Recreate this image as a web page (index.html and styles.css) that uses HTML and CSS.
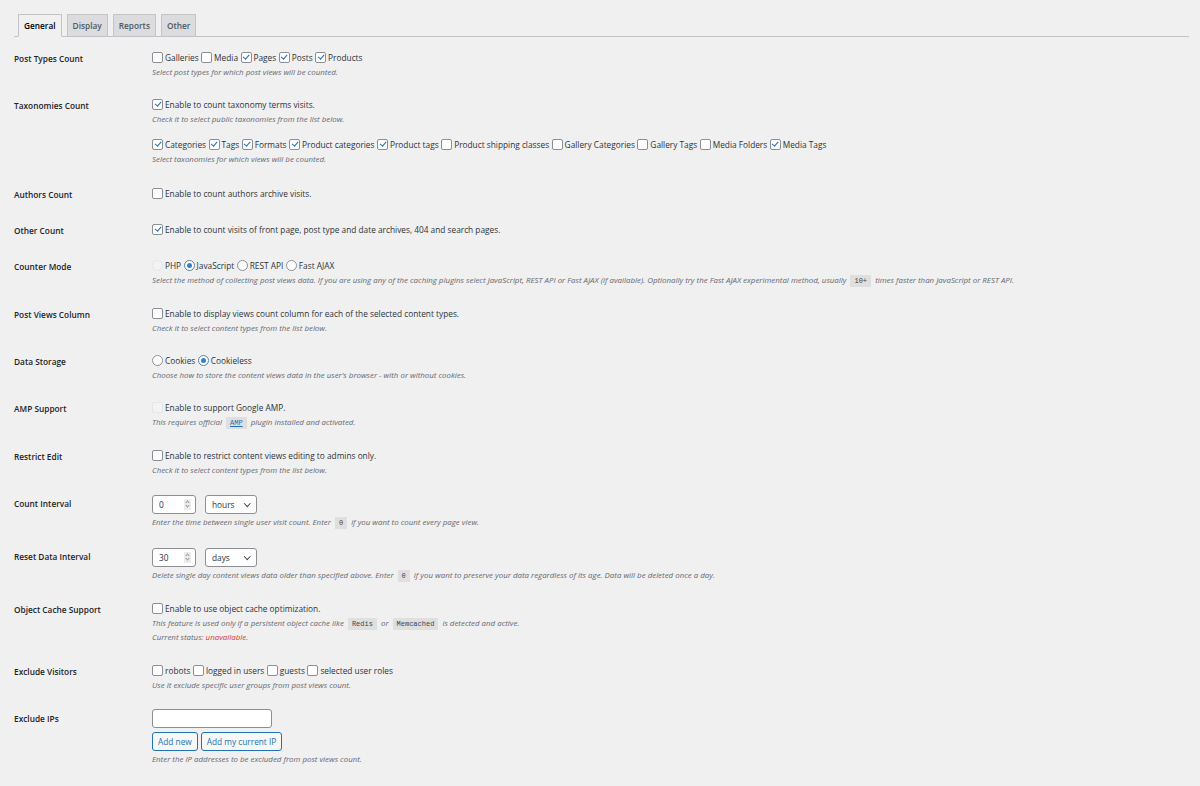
FILE: index.html
```html
<!DOCTYPE html>
<html lang="en">
<head>
    <meta charset="UTF-8">
    <title>Post Views Counter Settings</title>
    <link rel="stylesheet" href="styles.css">
</head>
<body>

    <div class="wrap">
        <!-- Settings tabs -->
        <nav class="tabs">
            <a class="tab active">General</a>
            <a class="tab">Display</a>
            <a class="tab">Reports</a>
            <a class="tab">Other</a>
        </nav>

        <div class="form">

            <div class="row">
                <div class="label">Post Types Count</div>
                <div class="field">
                    <div class="line">
                        <label class="opt"><span class="check"></span>Galleries</label>
                        <label class="opt"><span class="check"></span>Media</label>
                        <label class="opt"><span class="check on"></span>Pages</label>
                        <label class="opt"><span class="check on"></span>Posts</label>
                        <label class="opt"><span class="check on"></span>Products</label>
                    </div>
                    <p class="desc">Select post types for which post views will be counted.</p>
                </div>
            </div>

            <div class="row">
                <div class="label">Taxonomies Count</div>
                <div class="field">
                    <div class="line">
                        <label class="opt"><span class="check on"></span>Enable to count taxonomy terms visits.</label>
                    </div>
                    <p class="desc">Check it to select public taxonomies from the list below.</p>
                    <div class="line group">
                        <label class="opt"><span class="check on"></span>Categories</label>
                        <label class="opt"><span class="check on"></span>Tags</label>
                        <label class="opt"><span class="check on"></span>Formats</label>
                        <label class="opt"><span class="check on"></span>Product categories</label>
                        <label class="opt"><span class="check on"></span>Product tags</label>
                        <label class="opt"><span class="check"></span>Product shipping classes</label>
                        <label class="opt"><span class="check"></span>Gallery Categories</label>
                        <label class="opt"><span class="check"></span>Gallery Tags</label>
                        <label class="opt"><span class="check"></span>Media Folders</label>
                        <label class="opt"><span class="check on"></span>Media Tags</label>
                    </div>
                    <p class="desc last">Select taxonomies for which views will be counted.</p>
                </div>
            </div>

            <div class="row">
                <div class="label">Authors Count</div>
                <div class="field">
                    <div class="line">
                        <label class="opt"><span class="check"></span>Enable to count authors archive visits.</label>
                    </div>
                </div>
            </div>

            <div class="row">
                <div class="label">Other Count</div>
                <div class="field">
                    <div class="line">
                        <label class="opt"><span class="check on"></span>Enable to count visits of front page, post type and date archives, 404 and search pages.</label>
                    </div>
                </div>
            </div>

            <div class="row">
                <div class="label">Counter Mode</div>
                <div class="field">
                    <div class="line">
                        <label class="opt"><span class="radio disabled"></span>PHP</label>
                        <label class="opt"><span class="radio on"></span>JavaScript</label>
                        <label class="opt"><span class="radio"></span>REST API</label>
                        <label class="opt"><span class="radio"></span>Fast AJAX</label>
                    </div>
                    <p class="desc">Select the method of collecting post views data. If you are using any of the caching plugins select JavaScript, REST API or Fast AJAX (if available). Optionally try the Fast AJAX experimental method, usually <code>10+</code> times faster than JavaScript or REST API.</p>
                </div>
            </div>

            <div class="row">
                <div class="label">Post Views Column</div>
                <div class="field">
                    <div class="line">
                        <label class="opt"><span class="check"></span>Enable to display views count column for each of the selected content types.</label>
                    </div>
                    <p class="desc">Check it to select content types from the list below.</p>
                </div>
            </div>

            <div class="row">
                <div class="label">Data Storage</div>
                <div class="field">
                    <div class="line">
                        <label class="opt"><span class="radio"></span>Cookies</label>
                        <label class="opt"><span class="radio on"></span>Cookieless</label>
                    </div>
                    <p class="desc">Choose how to store the content views data in the user's browser - with or without cookies.</p>
                </div>
            </div>

            <div class="row">
                <div class="label">AMP Support</div>
                <div class="field">
                    <div class="line">
                        <label class="opt"><span class="check disabled"></span>Enable to support Google AMP.</label>
                    </div>
                    <p class="desc">This requires official <code><a href="#">AMP</a></code> plugin installed and activated.</p>
                </div>
            </div>

            <div class="row">
                <div class="label">Restrict Edit</div>
                <div class="field">
                    <div class="line">
                        <label class="opt"><span class="check"></span>Enable to restrict content views editing to admins only.</label>
                    </div>
                    <p class="desc">Check it to select content types from the list below.</p>
                </div>
            </div>

            <div class="row inputs">
                <div class="label">Count Interval</div>
                <div class="field">
                    <div class="line">
                        <span class="number">0<span class="spin"></span></span>
                        <span class="select">hours</span>
                    </div>
                    <p class="desc">Enter the time between single user visit count. Enter <code>0</code> if you want to count every page view.</p>
                </div>
            </div>

            <div class="row inputs">
                <div class="label">Reset Data Interval</div>
                <div class="field">
                    <div class="line">
                        <span class="number">30<span class="spin"></span></span>
                        <span class="select">days</span>
                    </div>
                    <p class="desc">Delete single day content views data older than specified above. Enter <code>0</code> if you want to preserve your data regardless of its age. Data will be deleted once a day.</p>
                </div>
            </div>

            <div class="row">
                <div class="label">Object Cache Support</div>
                <div class="field">
                    <div class="line">
                        <label class="opt"><span class="check"></span>Enable to use object cache optimization.</label>
                    </div>
                    <p class="desc multi">This feature is used only if a persistent object cache like <code>Redis</code> or <code>Memcached</code> is detected and active.<br>Current status: <span class="error">unavailable</span>.</p>
                </div>
            </div>

            <div class="row">
                <div class="label">Exclude Visitors</div>
                <div class="field">
                    <div class="line">
                        <label class="opt"><span class="check"></span>robots</label>
                        <label class="opt"><span class="check"></span>logged in users</label>
                        <label class="opt"><span class="check"></span>guests</label>
                        <label class="opt"><span class="check"></span>selected user roles</label>
                    </div>
                    <p class="desc">Use it exclude specific user groups from post views count.</p>
                </div>
            </div>

            <div class="row ips">
                <div class="label">Exclude IPs</div>
                <div class="field">
                    <span class="text-input"></span>
                    <div class="buttons">
                        <button class="button">Add new</button>
                        <button class="button">Add my current IP</button>
                    </div>
                    <p class="desc">Enter the IP addresses to be excluded from post views count.</p>
                </div>
            </div>

        </div>
    </div>

</body>
</html>
```

FILE: styles.css
```css
body {
    margin: 0;
    background: #f0f0f1;
    color: #3c434a;
    font-family: "Open Sans", "Noto Sans", sans-serif;
    font-size: 8.3px;
}

.wrap {
    padding: 14px 11px 30px 14px;
}

/* Tabs along the top */
.tabs {
    display: flex;
    gap: 5px;
    padding-left: 4px;
    border-bottom: 1px solid #c3c4c7;
}

.tab {
    display: block;
    height: 21px;
    line-height: 21px;
    padding: 0 5px;
    margin-bottom: -1px;
    border: 1px solid #c3c4c7;
    background: #dcdcde;
    color: #50575e;
    font-weight: 600;
    font-size: 8.3px;
}

.tab.active {
    background: #f0f0f1;
    border-bottom-color: #f0f0f1;
    color: #000;
}

/* Settings rows */
.form {
    margin-top: 2px;
}

.row {
    display: grid;
    grid-template-columns: 138px 1fr;
    padding: 10px 0;
}

.label {
    align-self: start;
    color: #1d2327;
    font-weight: 600;
    font-size: 8.3px;
    line-height: 16px;
    padding-top: 2px;
    margin-bottom: -2px;
}

.line {
    display: flex;
    flex-wrap: wrap;
    align-items: center;
    height: 16px;
    color: #2c3338;
}

.line.group {
    margin-top: 13px;
}

.opt {
    display: inline-flex;
    align-items: center;
    gap: 2px;
    margin-right: 2.5px;
    white-space: nowrap;
}

.desc {
    margin: 1px 0 -2px;
    font-size: 7.9px;
    line-height: 12px;
    font-style: italic;
    color: #646970;
}

.desc.last {
    margin-bottom: 0;
}

.desc.multi {
    line-height: 13px;
    margin-bottom: -2px;
}

.error {
    color: #d63638;
}

code {
    font-family: "Liberation Mono", monospace;
    font-style: normal;
    font-size: 7px;
    background: #dfdfe0;
    padding: 2px 4px;
    margin: 0 2px;
    color: #3c434a;
}

code a {
    color: #2271b1;
}

/* Checkboxes and radios */
.check,
.radio {
    position: relative;
    display: inline-block;
    width: 9px;
    height: 9px;
    border: 1px solid #8c8f94;
    background: #fff;
    border-radius: 2px;
    flex: none;
}

.radio {
    border-radius: 50%;
}

.check.on::after {
    content: "";
    position: absolute;
    left: 2.6px;
    top: 0.6px;
    width: 2.6px;
    height: 5.4px;
    border-right: 1.5px solid #2271b1;
    border-bottom: 1.5px solid #2271b1;
    transform: rotate(40deg);
}

.radio.on::after {
    content: "";
    position: absolute;
    left: 2px;
    top: 2px;
    width: 5px;
    height: 5px;
    border-radius: 50%;
    background: #3582c4;
}

.radio.on {
    border-color: #5b7ea3;
}

.check.disabled,
.radio.disabled {
    border-color: #e6e6e7;
    background: #f3f3f4;
}

/* Number, select and text fields */
.row.inputs .line {
    height: 20px;
    gap: 9px;
}

.row.inputs .desc {
    margin-top: 2px;
}

.number,
.select,
.text-input {
    position: relative;
    display: inline-block;
    box-sizing: border-box;
    height: 19px;
    line-height: 17px;
    border: 1px solid #8c8f94;
    border-radius: 3px;
    background: #fff;
    color: #2c3338;
}

.number {
    width: 44px;
    padding-left: 6px;
}

.spin {
    position: absolute;
    right: 4px;
    top: 3px;
    width: 7px;
    height: 11px;
    background: #ececec;
}

.spin::before,
.spin::after {
    content: "";
    position: absolute;
    left: 2px;
    width: 2px;
    height: 2px;
    border-left: 1px solid #9a9a9a;
    border-top: 1px solid #9a9a9a;
}

.spin::before {
    top: 2.5px;
    transform: rotate(45deg);
}

.spin::after {
    bottom: 2.5px;
    transform: rotate(-135deg);
}

.select {
    width: 52px;
    padding-left: 6px;
}

.select::after {
    content: "";
    position: absolute;
    right: 7px;
    top: 5px;
    width: 3.5px;
    height: 3.5px;
    border-right: 1.2px solid #3c434a;
    border-bottom: 1.2px solid #3c434a;
    transform: rotate(45deg);
}

/* Exclude IPs */
.text-input {
    display: block;
    width: 120px;
}

.buttons {
    display: flex;
    gap: 3px;
    margin-top: 4px;
}

.button {
    box-sizing: border-box;
    height: 19px;
    padding: 0 5px;
    border: 1px solid #2271b1;
    border-radius: 3px;
    background: #f6f7f7;
    color: #2271b1;
    font-family: inherit;
    font-size: 8.3px;
}

.row.ips .desc {
    margin-top: 2px;
}
```
